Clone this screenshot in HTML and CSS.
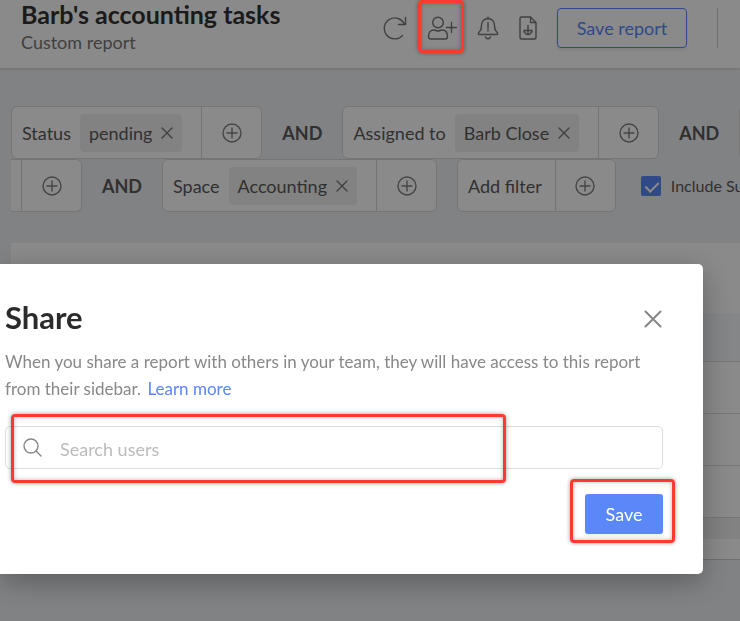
FILE: index.html
```html
<!DOCTYPE html>
<html lang="en">
<head>
    <meta charset="UTF-8">
    <meta name="viewport" content="width=device-width, initial-scale=1.0">
    <title>Barb's accounting tasks</title>
    <link rel="stylesheet" href="styles.css">
</head>
<body>

<!-- Shared icons -->
<svg class="sprite" aria-hidden="true">
    <symbol id="plus" viewBox="0 0 20 20">
        <circle cx="10" cy="10" r="9"/>
        <path d="M10 5v10M5 10h10"/>
    </symbol>
    <symbol id="cross" viewBox="0 0 12 12">
        <path d="M1 1l10 10M11 1L1 11"/>
    </symbol>
</svg>

<header class="header">
    <div class="heading">
        <h1>Barb's accounting tasks</h1>
        <p>Custom report</p>
    </div>
    <div class="actions">
        <button type="button" class="icon-btn" aria-label="Refresh">
            <svg width="24" height="24" viewBox="0 0 24 24"><path d="M19.500 19.500A10.500 10.500 0 1 1 21.500 8.500M22.500 1.500v7h-7"/></svg>
        </button>
        <button type="button" class="icon-btn share-btn" aria-label="Share">
            <svg width="30" height="24" viewBox="0 0 30 24"><circle cx="11" cy="6.500" r="5.300"/><path d="M1.500 20.500c0-4.500 2.500-6.500 5.500-6.500 1.500 0 2.500 1 4 1s2.500-1 4-1c3 0 5.500 2 5.500 6.500 0 1.500-.8 2.500-2.200 2.500H3.700c-1.400 0-2.200-1-2.200-2.500zM24.500 6.500v10M19.500 11.500h10"/></svg>
            <span class="marker"></span>
        </button>
        <button type="button" class="icon-btn" aria-label="Notifications">
            <svg width="22" height="24" viewBox="0 0 22 24"><path d="M11 1v2M2.200 18.500C1 18.500 1 17 2 16.200c2-1.700 2.500-3.700 2.500-7.200a6.500 6.500 0 0 1 13 0c0 3.500.5 5.500 2.500 7.200 1 .8 1 2.300-.2 2.300zM8.500 21c.5 1.300 1.300 1.800 2.500 1.800s2-.5 2.500-1.800M11 6.500v6M11 14v1"/></svg>
        </button>
        <button type="button" class="icon-btn" aria-label="Download">
            <svg width="18" height="24" viewBox="0 0 18 24"><path d="M11.500 1H2.500C1.500 1 1 1.500 1 2.500v19c0 1 .5 1.500 1.500 1.500h13c1 0 1.500-.5 1.500-1.500V6.500zM11.500 1v5.500H17M9 9.500v8M5 14.500h8c0 2.500-2.500 4-4 4s-4-1.500-4-4z"/></svg>
        </button>
        <button type="button" class="save-report">Save report</button>
        <span class="divider"></span>
    </div>
</header>

<main class="content">
    <div class="filters">
        <div class="filter-row">
            <div class="filter">
                <div class="filter-body">Status
                    <span class="chip">pending <button type="button" aria-label="Remove pending"><svg width="12" height="12"><use href="#cross"/></svg></button></span>
                </div>
                <button type="button" class="add" aria-label="Add status"><svg width="20" height="20"><use href="#plus"/></svg></button>
            </div>
            <span class="and">AND</span>
            <div class="filter">
                <div class="filter-body">Assigned to
                    <span class="chip">Barb Close <button type="button" aria-label="Remove Barb Close"><svg width="12" height="12"><use href="#cross"/></svg></button></span>
                </div>
                <button type="button" class="add" aria-label="Add assignee"><svg width="20" height="20"><use href="#plus"/></svg></button>
            </div>
            <span class="and">AND</span>
            <div class="filter"><div class="filter-body"></div></div>
        </div>
        <div class="filter-row">
            <div class="filter continued">
                <button type="button" class="add" aria-label="Add value"><svg width="20" height="20"><use href="#plus"/></svg></button>
            </div>
            <span class="and">AND</span>
            <div class="filter">
                <div class="filter-body">Space
                    <span class="chip">Accounting <button type="button" aria-label="Remove Accounting"><svg width="12" height="12"><use href="#cross"/></svg></button></span>
                </div>
                <button type="button" class="add" aria-label="Add space"><svg width="20" height="20"><use href="#plus"/></svg></button>
            </div>
            <div class="filter add-filter">
                <div class="filter-body">Add filter</div>
                <button type="button" class="add" aria-label="Add filter"><svg width="20" height="20"><use href="#plus"/></svg></button>
            </div>
            <label class="include"><input type="checkbox" checked>Include Subtasks</label>
        </div>
    </div>

    <div class="report">
        <div class="report-top"></div>
        <div class="report-head"></div>
        <div class="report-row"></div>
        <div class="report-row"></div>
        <div class="report-row"></div>
        <div class="report-scroll"></div>
        <div class="report-foot"></div>
    </div>
</main>

<div class="backdrop">
    <form class="dialog" role="dialog" aria-labelledby="share-title">
        <div class="dialog-head">
            <h2 id="share-title">Share</h2>
            <button type="button" class="close" aria-label="Close"><svg width="18" height="18"><use href="#cross"/></svg></button>
        </div>
        <p>When you share a report with others in your team, they will have access to this report from their sidebar. <a href="#">Learn more</a></p>
        <div class="search">
            <svg width="20" height="20" viewBox="0 0 20 20"><circle cx="8" cy="8" r="7"/><path d="M13 13l5 5"/></svg>
            <input type="text" placeholder="Search users" aria-label="Search users">
            <span class="marker"></span>
        </div>
        <div class="dialog-foot">
            <div class="save-wrap">
                <button type="submit" class="save">Save</button>
                <span class="marker"></span>
            </div>
        </div>
    </form>
</div>

</body>
</html>
```

FILE: styles.css
```css
* {
    box-sizing: border-box;
}
body {
    margin: 0;
    min-height: 100vh;
    font-family: Lato, "Liberation Sans", sans-serif;
    font-size: 18px;
    line-height: 24px;
    color: #5a5a5a;
    background-color: #eff1f4;
    overflow: hidden;
}
h1, h2, p {
    margin: 0;
}
button, input {
    font: inherit;
    color: inherit;
}
button {
    padding: 0;
    border: none;
    background: none;
    cursor: pointer;
}
svg {
    display: block;
    fill: none;
    stroke: currentColor;
    stroke-width: 1.4;
    stroke-linecap: round;
    stroke-linejoin: round;
}
.sprite {
    position: absolute;
    width: 0;
    height: 0;
}

/* Header */
.header {
    display: flex;
    justify-content: space-between;
    height: 68px;
    padding: 0 22px 0 21px;
    background-color: #fff;
    box-shadow: 0 1px 3px rgba(0, 0, 0, 0.15);
}
.heading {
    white-space: nowrap;
}
h1 {
    font-size: 25px;
    line-height: 28px;
    color: #333;
}
.heading p {
    line-height: 28px;
    color: #777;
}
.actions {
    display: flex;
    align-items: center;
    height: 40px;
    margin-top: 8px;
    gap: 20px;
    color: #777;
}
.icon-btn {
    position: relative;
}
.save-report {
    width: 130px;
    height: 40px;
    border: 1px solid #5a88f9;
    border-radius: 4px;
    color: #5a88f9;
    box-shadow: 0 2px 3px rgba(0, 0, 0, 0.08);
}
.divider {
    width: 1px;
    height: 40px;
    margin-left: 10px;
    background-color: #d0d0d0;
}

/* Red callouts, shown above the backdrop */
.marker {
    position: absolute;
    z-index: 2;
    border: 3px solid #fd3a30;
    border-radius: 4px;
    box-shadow: 0 0 4px rgba(0, 0, 0, 0.4), inset 0 0 4px rgba(0, 0, 0, 0.3);
    pointer-events: none;
}
.share-btn .marker {
    inset: -16px -7px -13px -9px;
}

/* Filters */
.content {
    padding: 38px 0 0 11px;
}
.filters {
    overflow: hidden;
}
.filter-row {
    display: flex;
    align-items: center;
    height: 53px;
    white-space: nowrap;
}
.filter-row > * {
    flex-shrink: 0;
}
.filter {
    display: flex;
    height: 53px;
    background-color: #fff;
    border: 1px solid #d8d8d8;
    border-radius: 6px;
}
.filter-body {
    display: flex;
    align-items: center;
    gap: 9px;
    padding: 0 19px 0 10px;
}
.chip {
    display: flex;
    align-items: center;
    gap: 9px;
    height: 38px;
    padding: 0 9px;
    background-color: #f1f1f1;
    border-radius: 4px;
}
.chip button {
    color: #777;
}
.add {
    display: grid;
    place-items: center;
    width: 60px;
    border-left: 1px solid #d8d8d8;
    color: #808080;
}
.continued {
    padding-left: 10px;
    border-left: none;
    border-radius: 0 6px 6px 0;
}
.add-filter {
    margin-left: 20px;
}
.add-filter .filter-body {
    padding-right: 13px;
}
.and {
    width: 80px;
    text-align: center;
    font-weight: bold;
}
.include {
    display: flex;
    align-items: center;
    gap: 10px;
    margin-left: 25px;
    font-size: 16px;
}
.include input {
    appearance: none;
    position: relative;
    width: 20px;
    height: 20px;
    margin: 0;
    background-color: #5a88f9;
    border-radius: 2px;
}
.include input::after {
    content: "";
    position: absolute;
    left: 7px;
    top: 3px;
    width: 6px;
    height: 11px;
    border: solid #fff;
    border-width: 0 2px 2px 0;
    transform: rotate(45deg);
}

/* Report table behind the dialog */
.report {
    margin-top: 31px;
    background-color: #fff;
    border-bottom: 1px solid #d0d0d0;
}
.report-top {
    height: 70px;
}
.report-head {
    height: 49px;
    background-color: #f5f7fa;
    border-bottom: 1px solid #dcdcdc;
}
.report-row {
    height: 52px;
    border-bottom: 1px solid #dcdcdc;
}
.report-scroll {
    height: 21px;
    background-color: #f0f0f0;
}
.report-foot {
    height: 20px;
}

/* Share dialog */
.backdrop {
    position: fixed;
    inset: 0;
    z-index: 1;
    padding: 264px 37px 0 0;
    background-color: rgba(0, 0, 0, 0.46);
}
.dialog {
    padding: 35px 40px 40px 5px;
    background-color: #fff;
    border-radius: 0 5px 5px 0;
    box-shadow: 0 8px 30px rgba(0, 0, 0, 0.3);
}
.dialog-head {
    display: flex;
    align-items: center;
    justify-content: space-between;
    height: 36px;
    margin-bottom: 13px;
}
h2 {
    font-size: 31px;
    line-height: 36px;
    color: #2b2b2b;
}
.close {
    margin: 4px 1px 0 0;
    color: #888;
}
.dialog p {
    font-size: 17px;
    line-height: 27px;
    color: #888;
}
.dialog a {
    margin-left: 2px;
    color: #5a88f9;
    text-decoration: none;
}
.search {
    position: relative;
    display: flex;
    align-items: center;
    gap: 17px;
    height: 43px;
    margin-top: 24px;
    padding-left: 17px;
    border: 1px solid #ddd;
    border-radius: 5px;
    color: #888;
}
.search input {
    flex: 1;
    min-width: 0;
    padding: 2px 0 0;
    border: none;
    outline: none;
    background: none;
}
.search input::placeholder {
    color: #bbb;
}
.search .marker {
    inset: -13px 156px -15px 5px;
}
.dialog-foot {
    display: flex;
    justify-content: flex-end;
    margin-top: 25px;
}
.save-wrap {
    position: relative;
}
.save {
    width: 78px;
    height: 40px;
    background-color: #5a88f9;
    border-radius: 3px;
    color: #fff;
    box-shadow: 0 3px 3px rgba(0, 0, 0, 0.06);
}
.save-wrap .marker {
    inset: -15px -12px -9px -15px;
}
```
